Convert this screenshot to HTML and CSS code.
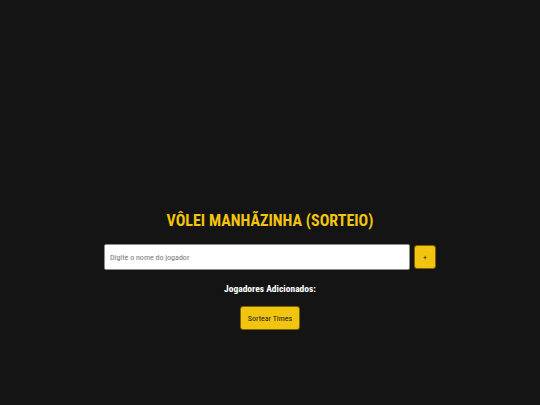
FILE: index.html
```html
<!DOCTYPE html>
<html lang="pt-BR">
<head>
<meta charset="utf-8">
<title>Vôlei Manhãzinha</title>
<link rel="stylesheet" href="styles.css">
</head>
<body>
<main class="app">
  <h1 class="title">VÔLEI MANHÃZINHA (SORTEIO)</h1>
  <div class="add-row">
    <input class="name-input" type="text" placeholder="Digite o nome do jogador">
    <button class="btn btn-add">+</button>
  </div>
  <h2 class="subtitle">Jogadores Adicionados:</h2>
  <ul class="players"></ul>
  <button class="btn btn-draw">Sortear Times</button>
</main>
</body>
</html>
```
FILE: styles.css
```css
html, body {
  margin: 0;
  padding: 0;
  background: #141414;
  height: 100%;
}
body {
  font-family: Roboto, "Liberation Sans", Arial, sans-serif;
  font-stretch: condensed;
  color: #ffffff;
}
.app {
  display: flex;
  flex-direction: column;
  align-items: center;
  padding-top: 211px;
}
.title {
  margin: 0;
  font-size: 16px;
  font-weight: bold;
  color: #f1c40f;
  line-height: 20px;
}
.add-row {
  display: flex;
  align-items: center;
  gap: 4px;
  margin-top: 13px;
}
.name-input {
  width: 306px;
  height: 26px;
  box-sizing: border-box;
  border: 1px solid #8c8c8c;
  border-radius: 2px;
  padding: 0 5px;
  font-family: inherit;
  font-stretch: inherit;
  font-size: 8px;
  background: #fff;
  color: #222;
}
.name-input::placeholder {
  color: #777;
}
.btn {
  background: #f1c40f;
  color: #1a1a1a;
  border: 1px solid #7a6200;
  border-radius: 3px;
  font-family: inherit;
  font-stretch: inherit;
  cursor: pointer;
}
.btn-add {
  width: 22px;
  height: 24px;
  font-size: 8px;
  padding: 0;
}
.subtitle {
  margin: 13px 0 0;
  font-size: 9.5px;
  font-weight: bold;
  line-height: 12px;
}
.players {
  margin: 0;
  padding: 0;
  list-style: none;
}
.btn-draw {
  margin-top: 11px;
  width: 60px;
  height: 24px;
  font-size: 8px;
  padding: 0;
}
```
